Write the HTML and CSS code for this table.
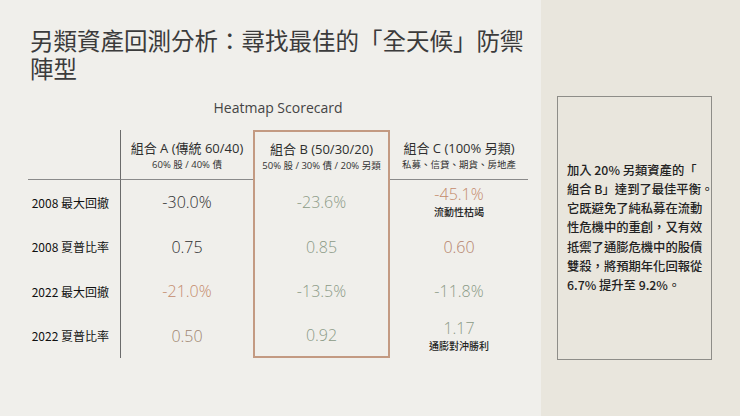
FILE: index.html
```html
<!DOCTYPE html>
<html lang="zh-Hant">
<head>
<meta charset="utf-8">
<title>另類資產回測分析</title>
<link rel="stylesheet" href="styles.css">
</head>
<body>
<div class="page">
  <main class="main">
    <h1 class="title">另類資產回測分析：尋找最佳的「全天候」防禦陣型</h1>
    <div class="caption">Heatmap Scorecard</div>
    <div class="table">
      <div class="cell label head"></div>
      <div class="cell head"><div class="h-main">組合 A (傳統 60/40)</div><div class="h-sub">60% 股 / 40% 債</div></div>
      <div class="cell head best best-top"><div class="h-main">組合 B (50/30/20)</div><div class="h-sub">50% 股 / 30% 債 / 20% 另類</div></div>
      <div class="cell head"><div class="h-main">組合 C (100% 另類)</div><div class="h-sub">私募、信貸、期貨、房地產</div></div>

      <div class="cell label">2008 最大回撤</div>
      <div class="cell val dark">-30.0%</div>
      <div class="cell val best green">-23.6%</div>
      <div class="cell val orange"><div class="num">-45.1%</div><div class="note">流動性枯竭</div></div>

      <div class="cell label">2008 夏普比率</div>
      <div class="cell val dark">0.75</div>
      <div class="cell val best green">0.85</div>
      <div class="cell val rust">0.60</div>

      <div class="cell label">2022 最大回撤</div>
      <div class="cell val orange">-21.0%</div>
      <div class="cell val best green">-13.5%</div>
      <div class="cell val green">-11.8%</div>

      <div class="cell label">2022 夏普比率</div>
      <div class="cell val brown">0.50</div>
      <div class="cell val best best-bottom green">0.92</div>
      <div class="cell val green"><div class="num">1.17</div><div class="note">通膨對沖勝利</div></div>
    </div>
  </main>
  <aside class="aside">
    <div class="insight">
      <p class="insight-text">加入 20% 另類資產的「<br>組合 B」達到了最佳平衡。<br>它既避免了純私募在流動<br>性危機中的重創，又有效<br>抵禦了通膨危機中的股債<br>雙殺，將預期年化回報從<br>6.7% 提升至 9.2%。</p>
    </div>
  </aside>
</div>
</body>
</html>
```

FILE: styles.css
```css
* { box-sizing: border-box; }
html, body {
  margin: 0;
  padding: 0;
  width: 740px;
  height: 416px;
  overflow: hidden;
  background: #f0efeb;
  font-family: "Open Sans", "Noto Sans CJK TC", sans-serif;
  color: #2b2b2b;
}
.page {
  display: flex;
  width: 740px;
  height: 416px;
}
.main {
  width: 541px;
  padding: 26px 0 0 28px;
}
.title {
  margin: 0 0 0 2px;
  width: 505px;
  font-family: "Noto Sans CJK TC", sans-serif;
  font-weight: 400;
  font-size: 23.5px;
  line-height: 28px;
  color: #3b3b3b;
}
.caption {
  margin-top: 16px;
  width: 500px;
  text-align: center;
  font-size: 14px;
  line-height: 20px;
  color: #444;
}
.table {
  margin-top: 12px;
  display: grid;
  grid-template-columns: 93px 132px 137px 138px;
  grid-template-rows: 50px repeat(4, 44.5px);
}
.cell {
  display: flex;
  flex-direction: column;
  align-items: center;
  justify-content: center;
  text-align: center;
}
.label {
  align-items: flex-end;
  padding-right: 11px;
  border-right: 1px solid #6b6b6b;
  font-family: "Noto Sans CJK TC", sans-serif;
  font-size: 12px;
  font-weight: 400;
  color: #111;
}
.head {
  border-bottom: 1.5px solid #8a8a8a;
  padding-top: 2px;
}
.head.best { border-bottom: none; padding-top: 0; }
.h-main {
  font-family: "Open Sans", "Noto Sans CJK TC", sans-serif;
  font-size: 13px;
  line-height: 19px;
  color: #2f2f2f;
}
.h-sub {
  font-family: "Open Sans", "Noto Sans CJK TC", sans-serif;
  font-size: 9.5px;
  line-height: 14px;
  color: #333;
}
.best {
  border-left: 2px solid #c39a82;
  border-right: 2px solid #c39a82;
}
.best-top { border-top: 2px solid #c39a82; }
.best-bottom { border-bottom: 2px solid #c39a82; }
.val {
  font-size: 16px;
  font-weight: 300;
  line-height: 18px;
}
.num { line-height: 16px; }
.note {
  margin-top: 4px;
  font-family: "Noto Sans CJK TC", sans-serif;
  font-size: 10px;
  font-weight: 500;
  line-height: 12px;
  color: #222;
}
.dark { color: #2e2e2e; }
.green { color: #8b9a86; }
.orange { color: #c48b6b; }
.rust { color: #b5826a; }
.brown { color: #9e8570; }
.aside {
  flex: 1;
  background: #e9e6dd;
  padding: 96px 0 0 16px;
}
.insight {
  width: 155px;
  height: 264px;
  border: 1px solid #8e8d88;
  display: flex;
  align-items: center;
  padding: 0 4px 0 9px;
}
.insight-text {
  margin: 0;
  font-family: "Noto Sans CJK TC", sans-serif;
  font-size: 12.3px;
  line-height: 19.2px;
  font-weight: 500;
  color: #222;
  white-space: nowrap;
}
```
